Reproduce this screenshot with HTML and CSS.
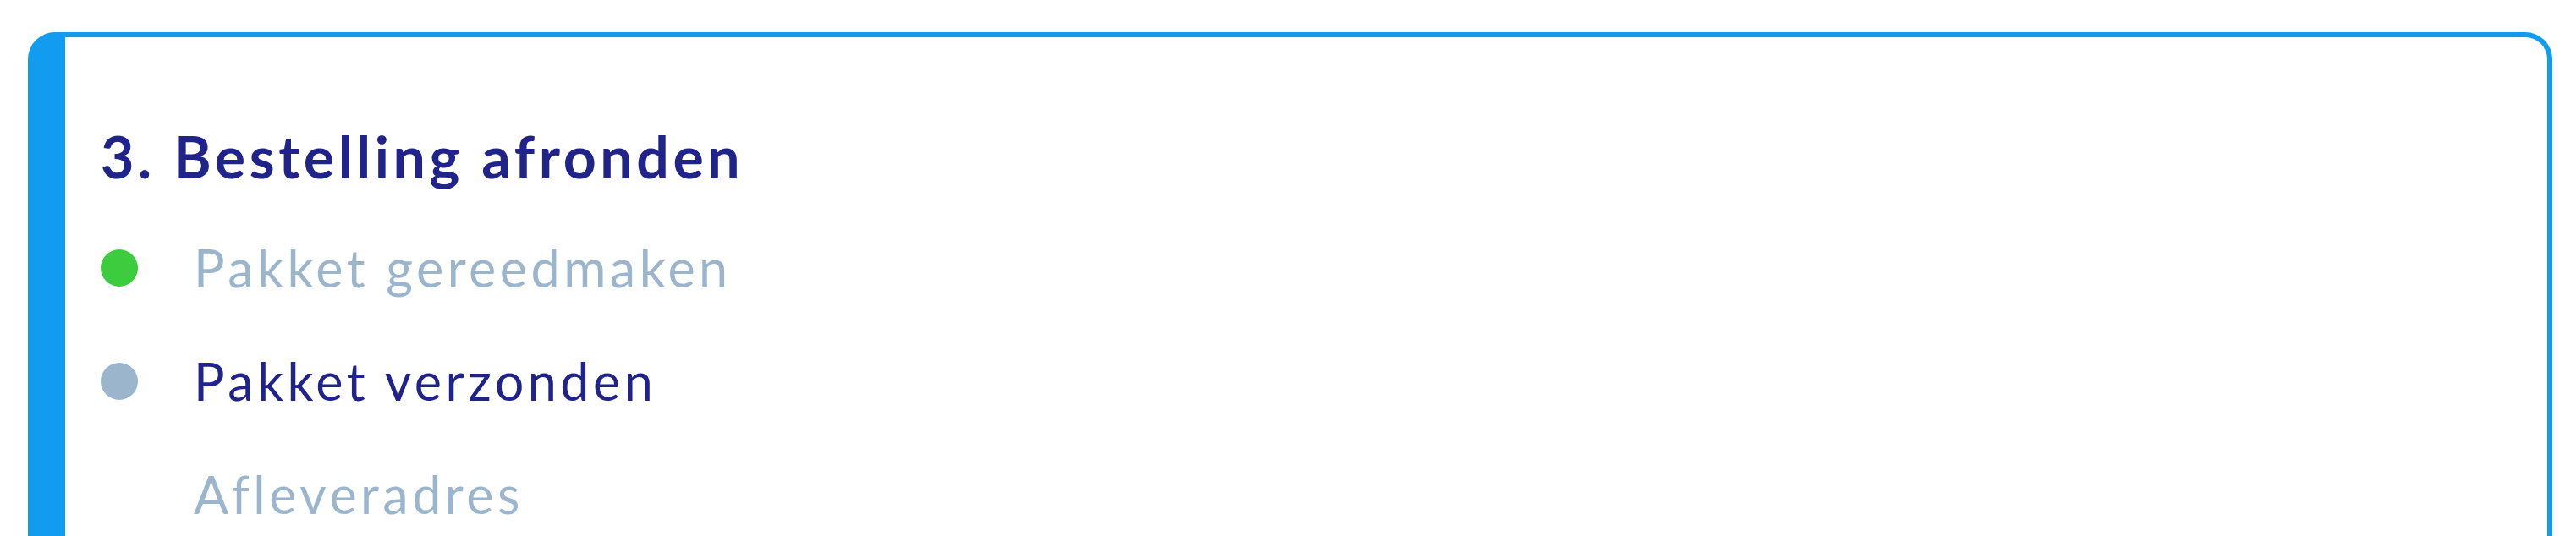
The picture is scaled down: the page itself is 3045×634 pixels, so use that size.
FILE: index.html
```html
<!DOCTYPE html>
<html lang="nl">
<head>
  <meta charset="UTF-8">
  <meta name="viewport" content="width=device-width, initial-scale=1.0">
  <title>Bestelling afronden</title>
  <link rel="stylesheet" href="styles.css">
</head>
<body>
  <!-- Step card -->
  <div class="step-card">
    <h2 class="step-title">3. Bestelling afronden</h2>
    <ul class="steps">
      <li class="step done"><span class="dot"></span>Pakket gereedmaken</li>
      <li class="step active"><span class="dot"></span>Pakket verzonden</li>
      <li class="step todo"><span class="dot"></span>Afleveradres</li>
    </ul>
  </div>
</body>
</html>
```

FILE: styles.css
```css
body { margin: 38px 28px 0 33px; background: #fff; font-family: Lato, "Open Sans", sans-serif; }
.step-card { border: 6px solid #119cf0; border-left-width: 44px; border-radius: 32px; padding: 100px 42px 120px; }
.step-title { margin: 0 0 24px; font-size: 68px; font-weight: 700; line-height: 1.2; color: #1f238a; letter-spacing: 4.6px; }
.steps { list-style: none; margin: 0; padding: 0; }
.step { display: flex; align-items: center; gap: 66px; font-size: 61px; line-height: 134px; color: #9bb6cc; letter-spacing: 4.5px; }
.dot { width: 44px; height: 44px; border-radius: 50%; flex: none; }
.done .dot { background: #3dcc3d; }
.active { color: #1f238a; }
.active .dot { background: #9bb6cc; }
.todo .dot { visibility: hidden; }
```
